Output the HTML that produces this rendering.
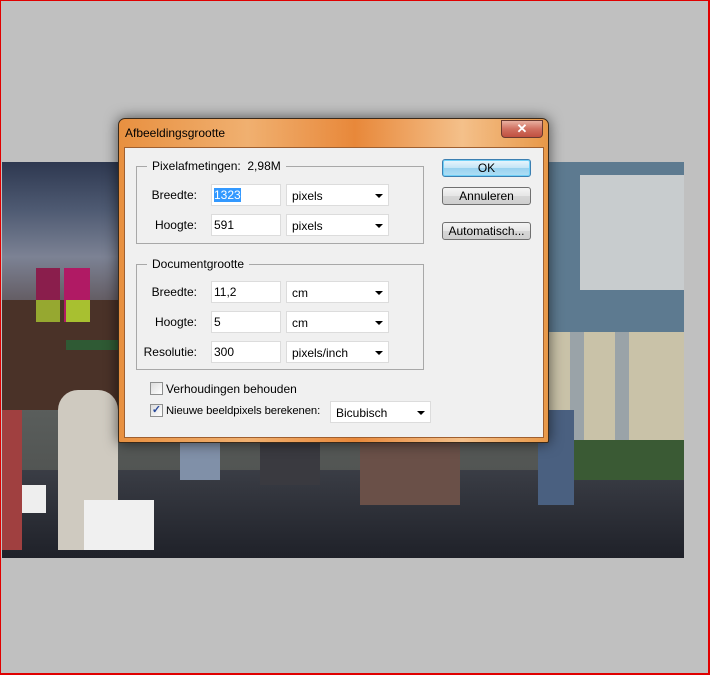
<!DOCTYPE html><html><head><style>
*{margin:0;padding:0;box-sizing:border-box}
body{width:710px;height:675px;background:#c0c0c0;position:relative;overflow:hidden;font-family:"Liberation Sans",sans-serif;font-size:12px;color:#000}
.a{position:absolute}
.frame{left:0;top:0;width:710px;height:675px;border:1px solid #e00000;border-right-width:2px;border-bottom-width:2px}
.lbl{position:absolute;font-size:12px;text-align:right;width:70px}
.in{position:absolute;background:#fff;border:1px solid #dcdcdc;height:22px;font-size:12px;padding:3px 2px}
.sel{position:absolute;background:#fff;border:1px solid #dcdcdc;height:22px;font-size:12px;padding:4px 5px}
.sel:after{content:"";position:absolute;right:5px;top:9px;border-left:4px solid transparent;border-right:4px solid transparent;border-top:4px solid #000}
.grp{position:absolute;border:1px solid #a8a8a8}
.gt{position:absolute;background:#f0f0f0;padding:0 5px;top:-8px;left:10px;font-size:12px}
.btn{position:absolute;width:89px;height:18px;border:1px solid #707070;border-radius:3px;background:linear-gradient(#f4f4f4,#e6e6e6 50%,#d6d6d6 51%,#cfcfcf);text-align:center;font-size:12px;line-height:16px}
.cb{position:absolute;width:13px;height:13px;border:1px solid #8e8f8f;background:linear-gradient(135deg,#dcdcdc,#fff)}
</style></head><body>
<div class="a" style="left:2px;top:162px;width:682px;height:396px;background:linear-gradient(#2e3850 0%,#4e5a72 12%,#7c8294 24%,#666068 34%,#4a4440 46%,#5a5e5c 62%,#525553 78%,#2a2d34 100%)"></div>
<div class="a" style="left:2px;top:470px;width:682px;height:88px;background:linear-gradient(#3a3d45,#1f2129)"></div>
<div class="a" style="left:2px;top:300px;width:120px;height:110px;background:#4a3228"></div>
<div class="a" style="left:36px;top:268px;width:24px;height:54px;background:#8a1e4c"></div>
<div class="a" style="left:64px;top:268px;width:26px;height:54px;background:#b01a64"></div>
<div class="a" style="left:36px;top:300px;width:24px;height:22px;background:#96a830"></div>
<div class="a" style="left:66px;top:300px;width:24px;height:22px;background:#a8c030"></div>
<div class="a" style="left:66px;top:340px;width:52px;height:10px;background:#2f5a34"></div>
<div class="a" style="left:548px;top:162px;width:136px;height:170px;background:#5d7a90"></div>
<div class="a" style="left:580px;top:175px;width:104px;height:115px;background:#c8ccce"></div>
<div class="a" style="left:548px;top:332px;width:136px;height:110px;background:#c9c2a8"></div>
<div class="a" style="left:570px;top:332px;width:14px;height:110px;background:#9aa3a8"></div>
<div class="a" style="left:615px;top:332px;width:14px;height:110px;background:#9aa3a8"></div>
<div class="a" style="left:570px;top:440px;width:114px;height:40px;background:#3a5a34"></div>
<div class="a" style="left:58px;top:390px;width:60px;height:160px;background:#cfcac0;border-radius:20px 20px 0 0"></div>
<div class="a" style="left:84px;top:500px;width:70px;height:50px;background:#f0f0f0"></div>
<div class="a" style="left:2px;top:410px;width:20px;height:140px;background:#a04040"></div>
<div class="a" style="left:22px;top:485px;width:24px;height:28px;background:#eee"></div>
<div class="a" style="left:360px;top:440px;width:100px;height:65px;background:#6a5048"></div>
<div class="a" style="left:538px;top:410px;width:36px;height:95px;background:#4a6080"></div>
<div class="a" style="left:260px;top:440px;width:60px;height:45px;background:#3a3a40"></div>
<div class="a" style="left:180px;top:440px;width:40px;height:40px;background:#8090a8"></div>
<div class="a" style="left:118px;top:118px;width:431px;height:325px;border:1px solid #3a2a1a;border-radius:7px 7px 2px 2px;background:linear-gradient(90deg,#e89040,#f0b070 30%,#e8883a 55%,#f4c08a 80%,#e89848);box-shadow:0 0 14px rgba(0,0,0,.6)"></div>
<div class="a" style="left:125px;top:126px;font-size:12px;color:#000">Afbeeldingsgrootte</div>
<div class="a" style="left:501px;top:120px;width:42px;height:18px;border:1px solid #6a3a30;border-radius:0 0 4px 4px;background:linear-gradient(#e8b0a0,#d07060 50%,#c05040);color:#fff;text-align:center;font-weight:bold;font-size:13px;line-height:16px">✕</div>
<div class="a" style="left:124px;top:147px;width:420px;height:291px;background:#f0f0f0;border:1px solid #a06030"></div>
<div class="grp" style="left:136px;top:166px;width:288px;height:78px"><div class="gt">Pixelafmetingen:&nbsp; 2,98M</div></div>
<div class="lbl" style="left:127px;top:188px">Breedte:</div>
<div class="in" style="left:211px;top:184px;width:70px"><span style="background:#3399ff;color:#fff">1323</span></div>
<div class="sel" style="left:286px;top:184px;width:103px">pixels</div>
<div class="lbl" style="left:127px;top:218px">Hoogte:</div>
<div class="in" style="left:211px;top:214px;width:70px">591</div>
<div class="sel" style="left:286px;top:214px;width:103px">pixels</div>
<div class="grp" style="left:136px;top:264px;width:288px;height:106px"><div class="gt">Documentgrootte</div></div>
<div class="lbl" style="left:127px;top:285px">Breedte:</div>
<div class="in" style="left:211px;top:281px;width:70px">11,2</div>
<div class="sel" style="left:286px;top:281px;width:103px">cm</div>
<div class="lbl" style="left:127px;top:315px">Hoogte:</div>
<div class="in" style="left:211px;top:311px;width:70px">5</div>
<div class="sel" style="left:286px;top:311px;width:103px">cm</div>
<div class="lbl" style="left:127px;top:345px">Resolutie:</div>
<div class="in" style="left:211px;top:341px;width:70px">300</div>
<div class="sel" style="left:286px;top:341px;width:103px">pixels/inch</div>
<div class="btn" style="left:442px;top:159px;border-color:#3c7fb1;background:linear-gradient(#eaf6fd,#c4e5f6 50%,#98d1ef 51%,#b0dff5);box-shadow:inset 0 0 0 1px #6fd0f7">OK</div>
<div class="btn" style="left:442px;top:187px">Annuleren</div>
<div class="btn" style="left:442px;top:222px">Automatisch...</div>
<div class="cb" style="left:150px;top:382px"></div>
<div class="a" style="left:166px;top:382px">Verhoudingen behouden</div>
<div class="cb" style="left:150px;top:404px;font-size:11px;line-height:11px;text-align:center;color:#2a4a9a;font-weight:bold">✓</div>
<div class="a" style="left:166px;top:405px;font-size:11.3px;letter-spacing:-0.1px">Nieuwe beeldpixels berekenen:</div>
<div class="sel" style="left:330px;top:401px;width:101px">Bicubisch</div>
<div class="a frame"></div>
</body></html>
